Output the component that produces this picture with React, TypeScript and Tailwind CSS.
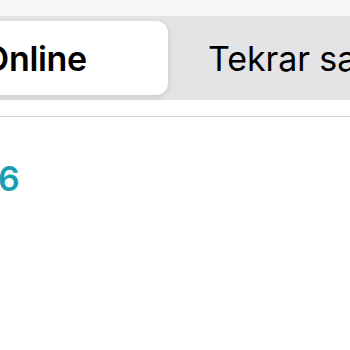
export default function App() {
  return (
    <div className="w-[350px] h-[350px] overflow-hidden bg-white font-['Inter',sans-serif]">
      <div className="h-[16px] bg-[#f7f7f7]" />
      <div className="h-[84px] bg-[#e4e4e6] flex items-center">
        <div className="flex items-center -ml-[98px] shrink-0">
          <div className="w-[266px] h-[74px] bg-white rounded-[12px] shadow-[0_2px_6px_rgba(0,0,0,0.12)] flex items-center justify-center">
            <span className="text-[34px] font-semibold text-black tracking-[-0.3px]">Online</span>
          </div>
          <div className="w-[280px] h-[74px] flex items-center pl-[40px]">
            <span className="text-[34px] text-black whitespace-nowrap tracking-[-0.1px]">Tekrar satın al</span>
          </div>
        </div>
      </div>
      <div className="h-[16px] bg-white" />
      <div className="h-px bg-[#d4d4d6]" />
      <div className="pt-[45px] -ml-[2px]">
        <span className="text-[34px] font-semibold text-[#189eb1] leading-none">6</span>
      </div>
    </div>
  );
}
